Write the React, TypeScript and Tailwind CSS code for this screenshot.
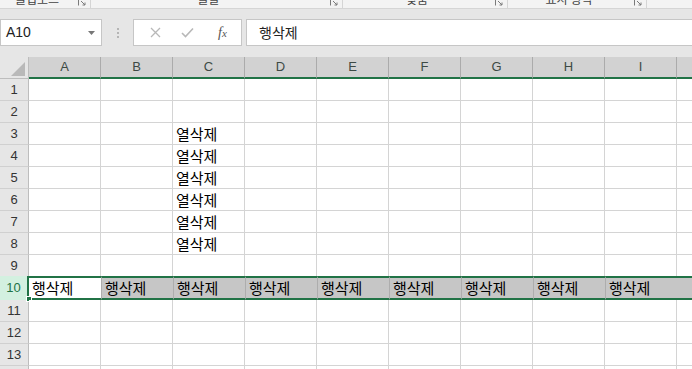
import React from 'react';

const COLS = ['A', 'B', 'C', 'D', 'E', 'F', 'G', 'H', 'I'];
const ROWS = Array.from({ length: 14 }, (_, i) => i + 1);

const RIBBON_GROUPS = [
  { label: '클립보드', width: 'w-[91px]' },
  { label: '글꼴', width: 'w-[252px]' },
  { label: '맞춤', width: 'w-[165px]' },
  { label: '표시 형식', width: 'w-[139px]' }
];

const FONT = { fontFamily: '"Noto Sans CJK KR", "Liberation Sans", sans-serif' };

function cellText(row: number, col: number) {
  if (row >= 3 && row <= 8 && col === 2) return '열삭제';
  if (row === 10 && col < 9) return '행삭제';
  return '';
}

function Launcher() {
  return (
    <svg width="8" height="8" viewBox="0 0 8 8" className="mt-[-2px]">
      <path d="M0.5 7.5V0.5H7.5" fill="none" stroke="#7a7a7a" strokeWidth="1" />
      <path d="M3 3L7 7M7 4.5V7H4.5" fill="none" stroke="#7a7a7a" strokeWidth="1" />
    </svg>
  );
}

function Ribbon() {
  return (
    <div className="flex h-[9px] overflow-hidden border-b border-[#d5d5d5] bg-[#f3f3f3]">
      {RIBBON_GROUPS.map((g) => (
        <div key={g.label} className={`flex ${g.width} shrink-0 items-start border-r border-[#d5d5d5]`}>
          <div className="mt-[-8px] flex-1 text-center text-[12px] leading-[14px] text-[#444]">{g.label}</div>
          <div className="flex w-[16px] justify-center">
            <Launcher />
          </div>
        </div>
      ))}
      <div className="flex-1" />
    </div>
  );
}

function FormulaBar() {
  return (
    <div className="flex h-[48px] items-start bg-[#e6e6e6] pt-[10px]">
      <div className="flex h-[27px] w-[102px] shrink-0 items-center justify-between border border-[#c6c6c6] bg-white pl-[5px] pr-[6px]">
        <span className="text-[14px] text-[#222]" style={{ fontFamily: '"Liberation Sans", sans-serif' }}>
          A10
        </span>
        <svg width="7" height="4" viewBox="0 0 7 4">
          <path d="M0 0H7L3.5 4Z" fill="#777" />
        </svg>
      </div>
      <div className="flex h-[27px] w-[31px] shrink-0 flex-col items-center justify-center gap-[2px]">
        <span className="h-[2px] w-[2px] bg-[#b5b5b5]" />
        <span className="h-[2px] w-[2px] bg-[#b5b5b5]" />
        <span className="h-[2px] w-[2px] bg-[#b5b5b5]" />
      </div>
      <div className="flex h-[27px] w-[109px] shrink-0 items-center border border-[#c6c6c6] bg-white">
        <div className="flex w-[36px] justify-center pl-[6px]">
          <svg width="11" height="11" viewBox="0 0 11 11">
            <path d="M1 1L10 10M10 1L1 10" stroke="#b8b8b8" strokeWidth="1.3" />
          </svg>
        </div>
        <div className="flex w-[34px] justify-center">
          <svg width="13" height="11" viewBox="0 0 13 11">
            <path d="M1 6L4.5 9.5L12 1.5" fill="none" stroke="#b8b8b8" strokeWidth="1.6" />
          </svg>
        </div>
        <div className="flex flex-1 justify-center">
          <span
            className="text-[14px] italic text-[#555]"
            style={{ fontFamily: '"Liberation Serif", serif' }}
          >
            f<span className="text-[11px]">x</span>
          </span>
        </div>
      </div>
      <div className="ml-[4px] flex h-[27px] flex-1 items-center border border-r-0 border-[#c6c6c6] bg-white pl-[12px]">
        <span className="text-[14px] text-[#222]">행삭제</span>
      </div>
    </div>
  );
}

function HeaderRow() {
  return (
    <div className="grid h-[22px] grid-cols-[29px_repeat(9,72px)_1fr]">
      <div className="flex items-end justify-end border-b border-r border-[#bdbdbd] bg-[#e6e6e6] pb-[2px] pr-[3px]">
        <svg width="14" height="14" viewBox="0 0 14 14">
          <path d="M0 14L14 0V14Z" fill="#b9b9b9" />
        </svg>
      </div>
      {COLS.map((c) => (
        <div
          key={c}
          className="flex items-center justify-center border-b-2 border-r border-b-[#217346] border-r-[#ababab] bg-[#d2d2d2] text-[13px] text-[#3d4a45]"
          style={{ fontFamily: '"Liberation Sans", sans-serif' }}
        >
          {c}
        </div>
      ))}
      <div className="border-b-2 border-b-[#217346] bg-[#d2d2d2]" />
    </div>
  );
}

function Row({ row }: { row: number }) {
  const selected = row === 10;
  const beforeSel = row === 9;
  const height = selected ? 'h-[24px]' : beforeSel ? 'h-[21px]' : 'h-[22px]';

  return (
    <div className={`grid ${height} grid-cols-[29px_repeat(9,72px)_1fr]`}>
      <div
        className={`flex items-center justify-center text-[13px] ${
          selected
            ? 'border-r-2 border-[#217346] bg-[#d3f0e0] text-[#217346]'
            : `border-r border-[#bdbdbd] bg-[#e6e6e6] text-[#333] ${beforeSel ? '' : 'border-b border-b-[#d0d0d0]'}`
        }`}
        style={{ fontFamily: '"Liberation Sans", sans-serif' }}
      >
        {row}
      </div>
      {[...COLS, ''].map((_, ci) => {
        const text = cellText(row, ci);
        const isActive = selected && ci === 0;
        let cls = '';
        if (selected) {
          cls = `border-y-2 border-[#217346] ${isActive ? 'bg-white' : 'bg-[#c6c6c6]'} ${
            ci === 0 || ci === 9 ? '' : 'border-l border-l-[#adadad]'
          }`;
        } else {
          cls = `bg-white ${ci < 9 ? 'border-r border-[#d4d4d4]' : ''} ${beforeSel ? '' : 'border-b border-b-[#d4d4d4]'}`;
        }
        return (
          <div key={ci} className={`relative flex items-end overflow-visible whitespace-nowrap pl-[3px] ${cls}`}>
            {text && <span className="text-[15px] leading-[20px] text-black">{text}</span>}
            {isActive && (
              <span className="absolute bottom-[-4px] left-[-3px] h-[6px] w-[6px] border border-white bg-[#217346]" />
            )}
          </div>
        );
      })}
    </div>
  );
}

export default function App() {
  return (
    <div className="h-[369px] w-[692px] overflow-hidden bg-[#e6e6e6]" style={FONT}>
      <Ribbon />
      <FormulaBar />
      <HeaderRow />
      {ROWS.map((r) => (
        <Row key={r} row={r} />
      ))}
    </div>
  );
}
